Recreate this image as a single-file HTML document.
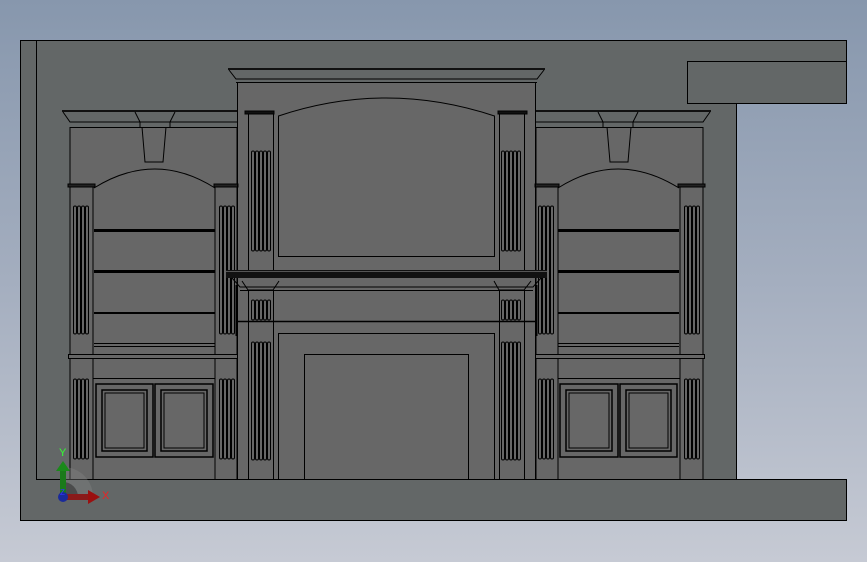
<!DOCTYPE html>
<html><head><style>
html,body{margin:0;padding:0;width:867px;height:562px;overflow:hidden}
body{background:linear-gradient(#8797ad 0%,#a4aebf 50%,#c6cad4 100%)}
svg{position:absolute;left:0;top:0}
</style></head><body>
<svg width="867" height="562" viewBox="0 0 867 562">
<defs>
<g id="fl4"><rect x="0" y="0" width="3" height="100%" rx="1.5"/></g>
<g id="case" fill="none" stroke="#000" stroke-width="1">
  <!-- cornice -->
  <path d="M62 110.5H237 M63 112L70 122H237 M70 127.5H237" />
  <rect x="62" y="110" width="175" height="2" fill="#111" stroke="none"/>
  <path d="M70 127V479 M237 127V479"/>
  <path d="M135 112L140 122H170L175 112 M140 122V127 M170 122V127"/>
  <path d="M142 127L145 162H163L166 127"/>
  <!-- upper columns -->
  <rect x="68" y="184" width="27" height="3" fill="#222"/>
  <rect x="214" y="184" width="24" height="3" fill="#222"/>
  <path d="M70 187V354 M93 187V354 M215 187V354 M94 188Q155 150 215 188"/>
  <!-- shelves -->
  <rect x="94" y="229" width="121" height="3" fill="#000" stroke="none"/>
  <rect x="94" y="270" width="121" height="3" fill="#000" stroke="none"/>
  <rect x="94" y="312" width="121" height="2" fill="#000" stroke="none"/>
  <path d="M94 343.5H215 M94 346.5H215"/>
  <!-- counter -->
  <rect x="68.5" y="354.5" width="169" height="4" fill="#666"/>
  <path d="M70 358V479 M93 358V479 M215 358V479 M93 378.5H215"/>
  <!-- doors -->
  <rect x="96" y="384" width="57" height="73" stroke-width="1.5"/>
  <rect x="155" y="384" width="58" height="73" stroke-width="1.5"/>
  <rect x="102" y="390" width="45" height="61" stroke-width="1.5"/>
  <rect x="105" y="393" width="39" height="55"/>
  <rect x="161" y="390" width="46" height="61" stroke-width="1.5"/>
  <rect x="164" y="393" width="40" height="55"/>
  <!-- flutes -->
  <g stroke-width="1">
    <rect x="73.5" y="206" width="3" height="128" rx="1.5"/><rect x="77.5" y="206" width="3" height="128" rx="1.5"/><rect x="81.5" y="206" width="3" height="128" rx="1.5"/><rect x="85.5" y="206" width="3" height="128" rx="1.5"/>
    <rect x="219.5" y="206" width="3" height="128" rx="1.5"/><rect x="223.5" y="206" width="3" height="128" rx="1.5"/><rect x="227.5" y="206" width="3" height="128" rx="1.5"/><rect x="231.5" y="206" width="3" height="128" rx="1.5"/>
    <rect x="73.5" y="379" width="3" height="80" rx="1.5"/><rect x="77.5" y="379" width="3" height="80" rx="1.5"/><rect x="81.5" y="379" width="3" height="80" rx="1.5"/><rect x="85.5" y="379" width="3" height="80" rx="1.5"/>
    <rect x="219.5" y="379" width="3" height="80" rx="1.5"/><rect x="223.5" y="379" width="3" height="80" rx="1.5"/><rect x="227.5" y="379" width="3" height="80" rx="1.5"/><rect x="231.5" y="379" width="3" height="80" rx="1.5"/>
  </g>
</g>
</defs>
<!-- wall -->
<path d="M20.5 40.5H846.5V103.5H736.5V479.5H846.5V520.5H20.5Z" fill="#636767" stroke="#000"/>
<rect x="687.5" y="61.5" width="159" height="42" fill="#636767" stroke="#000"/>
<path d="M36.5 40V479.5H736" stroke="#000" fill="none"/>
<!-- fills -->
<rect x="70" y="127" width="167" height="352" fill="#676767"/>
<rect x="536" y="127" width="167" height="352" fill="#676767"/>
<rect x="237" y="82" width="298" height="397" fill="#676767"/>
<use href="#case"/>
<use href="#case" transform="translate(773,0) scale(-1,1)"/>
<!-- center -->
<g fill="none" stroke="#000">
  <rect x="228" y="68" width="317" height="2" fill="#111" stroke="none"/>
  <path d="M229 70L236 79H537L544 70 M236 82.5H537 M237.5 82V479 M535.5 82V479"/>
  <rect x="245" y="111" width="29" height="3" fill="#111"/>
  <rect x="498" y="111" width="29" height="3" fill="#111"/>
  <path d="M248.5 114V270 M273.5 114V270 M499.5 114V270 M524.5 114V270"/>
  <path d="M278.5 116Q386 80 494.5 116V256.5H278.5Z"/>
  <rect x="226" y="270" width="321" height="8" fill="#111" stroke="none"/>
  <path d="M226 271.5H547" stroke="#555"/>
  <path d="M232 278L240 287H533L541 278 M236 285V336 M537 285V336 M242 281L248 290H273L279 281 M494 281L499 290H524L531 281 M240 290.5H533"/>
  <path d="M248.5 290V479 M273.5 290V479 M499.5 290V479 M524.5 290V479"/>
  <path d="M236 321.5H537" stroke-width="1.5"/>
  <path d="M278.5 479V333.5H494.5V479 M304.5 479V354.5H468.5V479"/>
  <g>
    <rect x="251.5" y="300" width="3" height="20" rx="1.5"/><rect x="255.5" y="300" width="3" height="20" rx="1.5"/><rect x="259.5" y="300" width="3" height="20" rx="1.5"/><rect x="263.5" y="300" width="3" height="20" rx="1.5"/><rect x="267.5" y="300" width="3" height="20" rx="1.5"/>
    <rect x="501.5" y="300" width="3" height="20" rx="1.5"/><rect x="505.5" y="300" width="3" height="20" rx="1.5"/><rect x="509.5" y="300" width="3" height="20" rx="1.5"/><rect x="513.5" y="300" width="3" height="20" rx="1.5"/><rect x="517.5" y="300" width="3" height="20" rx="1.5"/>
    <rect x="251.5" y="342" width="3" height="118" rx="1.5"/><rect x="255.5" y="342" width="3" height="118" rx="1.5"/><rect x="259.5" y="342" width="3" height="118" rx="1.5"/><rect x="263.5" y="342" width="3" height="118" rx="1.5"/><rect x="267.5" y="342" width="3" height="118" rx="1.5"/>
    <rect x="501.5" y="342" width="3" height="118" rx="1.5"/><rect x="505.5" y="342" width="3" height="118" rx="1.5"/><rect x="509.5" y="342" width="3" height="118" rx="1.5"/><rect x="513.5" y="342" width="3" height="118" rx="1.5"/><rect x="517.5" y="342" width="3" height="118" rx="1.5"/>
    <rect x="251.5" y="151" width="3" height="100" rx="1.5"/><rect x="255.5" y="151" width="3" height="100" rx="1.5"/><rect x="259.5" y="151" width="3" height="100" rx="1.5"/><rect x="263.5" y="151" width="3" height="100" rx="1.5"/><rect x="267.5" y="151" width="3" height="100" rx="1.5"/>
    <rect x="501.5" y="151" width="3" height="100" rx="1.5"/><rect x="505.5" y="151" width="3" height="100" rx="1.5"/><rect x="509.5" y="151" width="3" height="100" rx="1.5"/><rect x="513.5" y="151" width="3" height="100" rx="1.5"/><rect x="517.5" y="151" width="3" height="100" rx="1.5"/>
  </g>
</g>
<!-- triad -->
<path d="M63 497 L63 467 A30 30 0 0 1 93 497Z" fill="#888" opacity="0.35"/>
<path d="M63 497 L63 482 A15 15 0 0 1 78 497Z" fill="#333" opacity="0.6"/>
<rect x="60" y="470" width="6" height="27" fill="#1a7a1a"/>
<path d="M56 471L63 461L70 471Z" fill="#1a8a1a"/>
<rect x="63" y="494" width="26" height="6" fill="#8a1a1a"/>
<path d="M88 490L100 497L88 504Z" fill="#9a1010"/>
<circle cx="63" cy="497" r="5" fill="#1a2a9a"/>
<text x="59" y="456" font-family="Liberation Sans,sans-serif" font-size="11" fill="#3f3">Y</text>
<text x="102" y="499" font-family="Liberation Sans,sans-serif" font-size="11" fill="#e22">X</text>
<text x="60" y="495" font-family="Liberation Sans,sans-serif" font-size="8" fill="#33f">Z</text>
</svg>
</body></html>
